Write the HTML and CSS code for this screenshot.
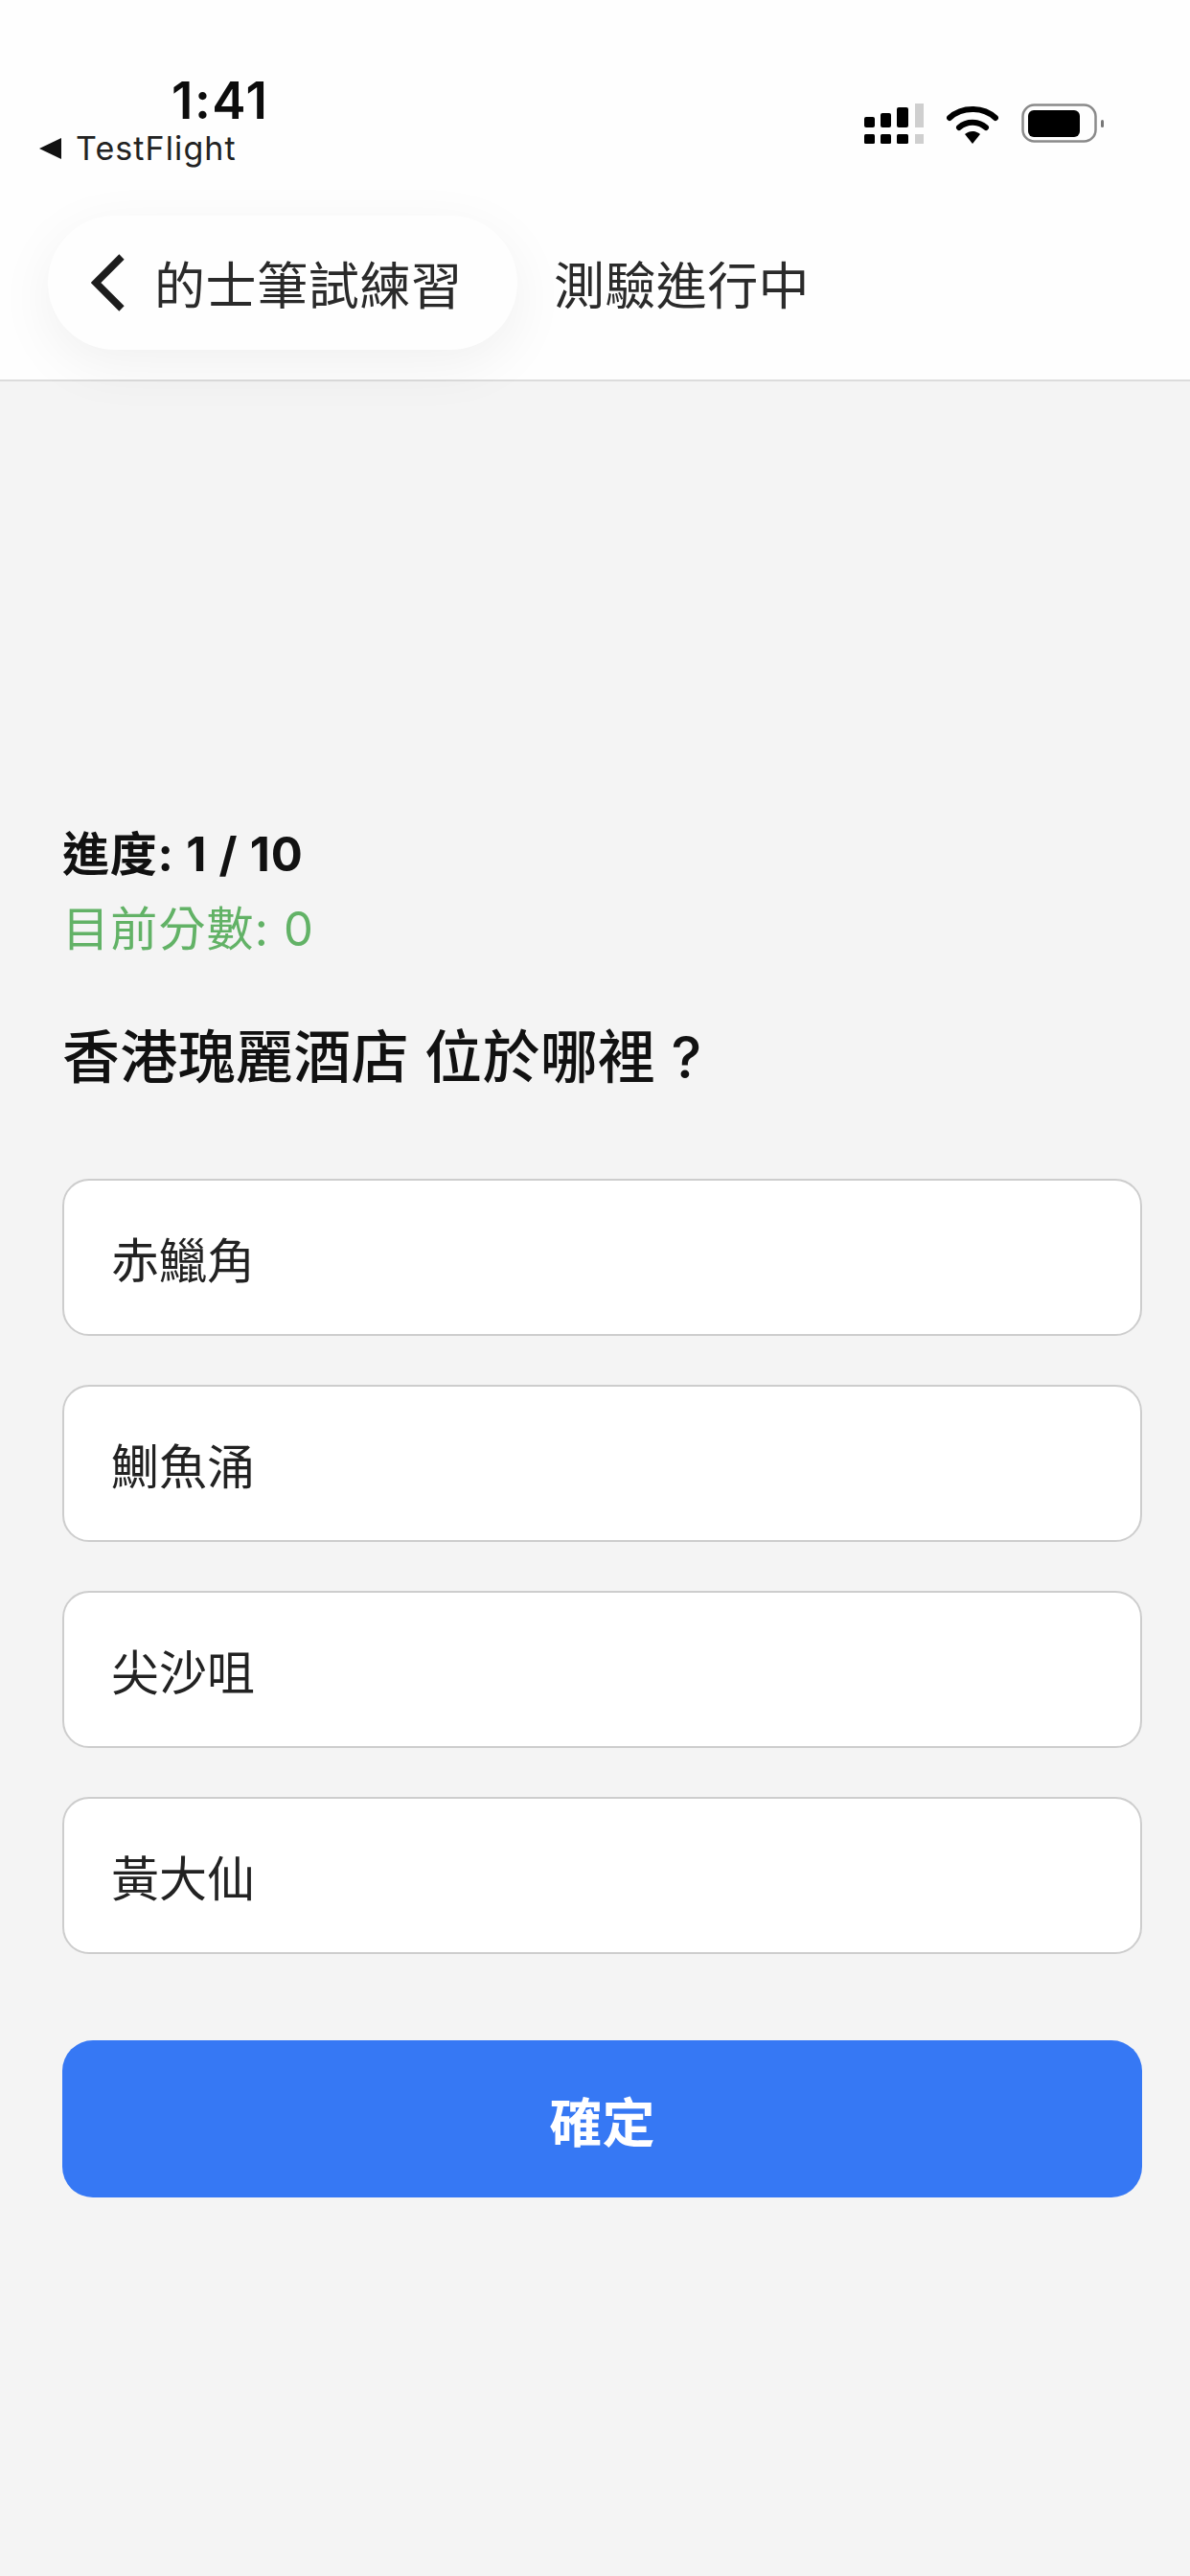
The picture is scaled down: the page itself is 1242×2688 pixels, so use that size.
FILE: index.html
```html
<!DOCTYPE html>
<html lang="zh-Hant">
<head>
<meta charset="utf-8">
<title>的士筆試練習</title>
<link rel="stylesheet" href="styles.css">
</head>
<body>
<header class="top">
  <div class="status">
    <div class="status-left">
      <div class="time">1:41</div>
      <div class="return"><span class="return-arrow"></span><span>TestFlight</span></div>
    </div>
    <div class="status-right">
      <svg class="sig" width="62" height="42" viewBox="0 0 62 42">
        <g fill="#000">
          <rect x="0" y="14" width="11" height="11" rx="2"/>
          <rect x="17" y="10" width="11" height="15" rx="2"/>
          <rect x="34" y="4" width="12" height="21" rx="2"/>
          <rect x="0" y="32" width="11" height="10" rx="1.5"/>
          <rect x="17" y="32" width="11" height="10" rx="1.5"/>
          <rect x="34" y="32" width="12" height="10" rx="1.5"/>
        </g>
        <rect x="53" y="0" width="9" height="25" fill="#cfcfcf"/>
        <rect x="53" y="32" width="9" height="10" fill="#cfcfcf"/>
      </svg>
      <svg class="wifi" width="54" height="42" viewBox="0 0 54 42">
        <path d="M3 15 C16 3 38 3 51 15" fill="none" stroke="#000" stroke-width="6" stroke-linecap="round"/>
        <path d="M13 25 C21 18 33 18 41 25" fill="none" stroke="#000" stroke-width="6" stroke-linecap="round"/>
        <path d="M19 32 C24 28 30 28 35 32 L27 42 Z" fill="#000"/>
      </svg>
      <svg class="batt" width="86" height="42" viewBox="0 0 86 42">
        <rect x="1.5" y="1.5" width="76" height="38" rx="12" fill="none" stroke="#8a8a8a" stroke-width="2.5"/>
        <rect x="7" y="7" width="54" height="28" rx="6" fill="#000"/>
        <rect x="83" y="17" width="3" height="8" rx="1.5" fill="#777"/>
      </svg>
    </div>
  </div>
  <nav class="nav">
    <a class="back">
      <svg class="chev" width="36" height="60" viewBox="0 0 36 60"><path d="M32 3 L5 30 L32 57" fill="none" stroke="#1c1c1c" stroke-width="7.5"/></svg>
      <span>的士筆試練習</span>
    </a>
    <h1 class="title">測驗進行中</h1>
  </nav>
</header>
<main class="quiz">
  <p class="progress">進度: 1 / 10</p>
  <p class="score">目前分數: 0</p>
  <h2 class="question">香港瑰麗酒店 位於哪裡 ?</h2>
  <div class="options">
    <button class="option">赤鱲角</button>
    <button class="option">鰂魚涌</button>
    <button class="option">尖沙咀</button>
    <button class="option">黃大仙</button>
  </div>
  <button class="confirm">確定</button>
</main>
</body>
</html>
```
FILE: styles.css
```css
* { box-sizing: border-box; }
html, body { margin: 0; padding: 0; }
body {
  width: 1242px;
  height: 2688px;
  background: #f4f4f4;
  color: #111;
  font-family: Inter, "Noto Sans CJK TC", "Noto Sans", sans-serif;
  overflow: hidden;
}
.top {
  position: relative;
  z-index: 1;
  height: 398px;
  padding-top: 85px;
  background: #fefefe;
  border-bottom: 2px solid #dcdcdc;
}
.status {
  display: flex;
  justify-content: space-between;
  align-items: flex-start;
  height: 140px;
}
.status-left { padding-left: 41px; }
.time {
  margin-left: 138px;
  font-size: 53px;
  line-height: 40px;
  font-weight: 600;
  letter-spacing: 1.5px;
  color: #0c0c0c;
}
.return {
  display: flex;
  align-items: center;
  gap: 15px;
  margin-top: 13px;
  font-size: 34px;
  line-height: 34px;
  letter-spacing: 1.1px;
  color: #222;
}
.return-arrow {
  width: 0;
  height: 0;
  border-top: 11px solid transparent;
  border-bottom: 11px solid transparent;
  border-right: 23px solid #111;
}
.status-right {
  display: flex;
  align-items: flex-start;
  gap: 24px;
  padding: 23px 90px 0 0;
}
.nav {
  display: flex;
  align-items: center;
  gap: 38px;
  padding-left: 50px;
}
.back {
  display: flex;
  align-items: center;
  width: 490px;
  height: 140px;
  padding-left: 45px;
  gap: 30px;
  border-radius: 70px;
  background: #fefefe;
  box-shadow: 0 16px 60px rgba(0, 0, 0, 0.06);
  font-size: 53px;
  letter-spacing: 0.6px;
  color: #2a2a2a;
}
.chev { flex: none; }
.title {
  margin: 0;
  font-size: 53px;
  letter-spacing: 0.4px;
  font-weight: 400;
  color: #2a2a2a;
}
.quiz { padding: 462px 50px 0 65px; }
.progress, .score {
  margin: 0;
  font-size: 49px;
  line-height: 64px;
}
.progress { font-weight: 700; letter-spacing: 0.8px; color: #111; }
.score { margin-top: 14px; letter-spacing: 1.2px; color: #62b266; }
.question {
  margin: 61px 0 0;
  font-size: 60px;
  line-height: 80px;
  font-weight: 500;
  letter-spacing: 0.3px;
  color: #111;
}
.options {
  display: flex;
  flex-direction: column;
  gap: 51px;
  margin-top: 87px;
}
.option {
  display: block;
  width: 100%;
  height: 164px;
  padding: 0 0 0 49px;
  text-align: left;
  background: #fff;
  border: 2px solid #cdcdcd;
  border-radius: 28px;
  font-family: inherit;
  font-size: 50px;
  color: #222;
}
.confirm {
  display: block;
  width: 100%;
  height: 164px;
  margin-top: 90px;
  background: #3678f4;
  border: 0;
  border-radius: 32px;
  font-family: inherit;
  font-size: 55px;
  font-weight: 700;
  color: #fff;
}
```
